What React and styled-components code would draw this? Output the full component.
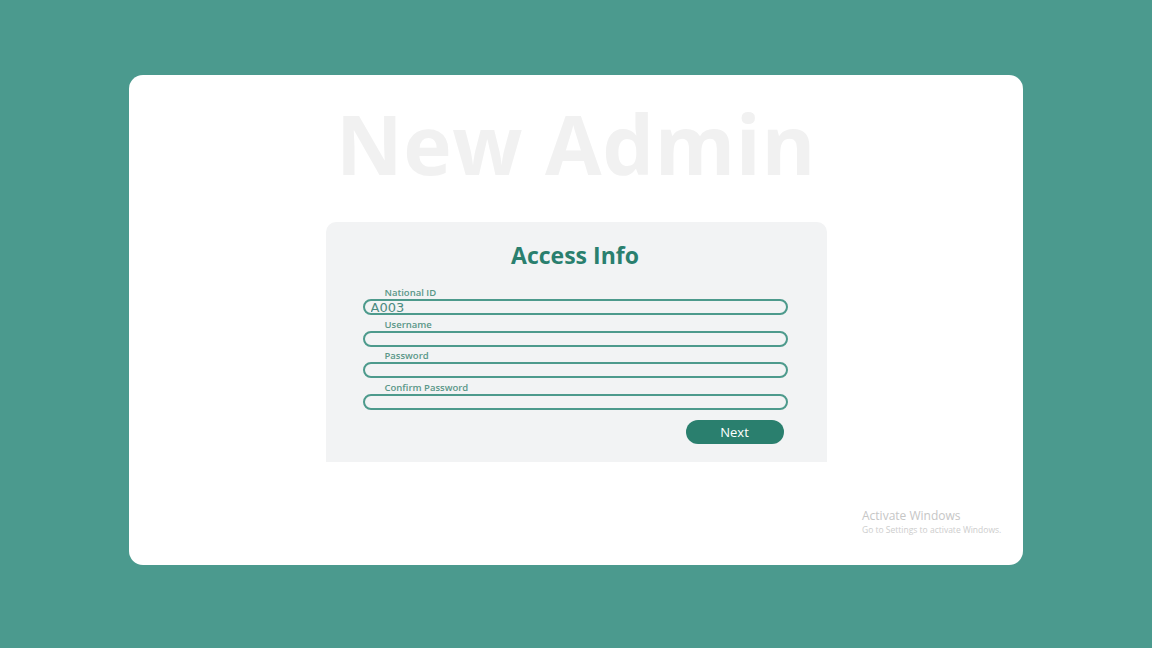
import React from "react";
import styled, { createGlobalStyle } from "styled-components";

const App = () => {
  return (
    <>
      <GlobalStyle />
      <Page>
        <Card>
          <BigTitle>New Admin</BigTitle>
          <Panel>
            <PanelTitle>Access Info</PanelTitle>
            <Fields>
              <Field>
                <Label>National ID</Label>
                <Input defaultValue="A003" />
              </Field>
              <Field>
                <Label>Username</Label>
                <Input />
              </Field>
              <Field>
                <Label>Password</Label>
                <Input type="password" />
              </Field>
              <Field>
                <Label>Confirm Password</Label>
                <Input type="password" />
              </Field>
            </Fields>
            <ButtonRow>
              <NextButton>Next</NextButton>
            </ButtonRow>
          </Panel>
          <Watermark>
            <WatermarkTitle>Activate Windows</WatermarkTitle>
            <WatermarkText>Go to Settings to activate Windows.</WatermarkText>
          </Watermark>
        </Card>
      </Page>
    </>
  );
};

export default App;

const GlobalStyle = createGlobalStyle`
  body {
    margin: 0;
    padding: 0;
    background: #4b9a8e;
    font-family: "Open Sans", "Liberation Sans", sans-serif;
  }
  * {
    box-sizing: border-box;
  }
`;
const Page = styled.div`
    width: 1152px;
    height: 648px;
    display: flex;
    justify-content: center;
    padding-top: 75px;
`;
const Card = styled.div`
    position: relative;
    width: 894px;
    height: 490px;
    background: #fff;
    border-radius: 14px;
    display: flex;
    flex-direction: column;
    align-items: center;
    padding-top: 13px;
`;
const BigTitle = styled.div`
    color: #f1f1f1;
    font-family: "Open Sans", sans-serif;
    font-size: 82px;
    font-weight: 700;
    line-height: 110px;
    letter-spacing: 0.6px;
    height: 110px;
`;
const Panel = styled.div`
    margin-top: 24px;
    width: 501px;
    background: #f2f3f4;
    border-radius: 10px 10px 0 0;
    padding: 18px 39px 18px 37px;
    display: flex;
    flex-direction: column;
`;
const PanelTitle = styled.div`
    text-align: center;
    color: #2a7f6e;
    font-family: "Open Sans", sans-serif;
    font-size: 23px;
    font-weight: 700;
    line-height: 30px;
    margin-bottom: 17px;
`;
const Fields = styled.div`
    display: flex;
    flex-direction: column;
    gap: 3.5px;
`;
const Field = styled.div`
    display: flex;
    flex-direction: column;
`;
const Label = styled.label`
    padding-left: 22px;
    color: #5a9788;
    font-family: "Open Sans", sans-serif;
    font-size: 9.5px;
    font-weight: 600;
    line-height: 12px;
`;
const Input = styled.input`
    width: 100%;
    height: 16px;
    border: 2px solid #4d9a8c;
    border-radius: 8px;
    background: transparent;
    padding: 0 6px;
    color: #4b8a7f;
    font-family: "DejaVu Sans", sans-serif;
    font-size: 13px;
    outline: none;
`;
const ButtonRow = styled.div`
    display: flex;
    justify-content: flex-end;
    margin-top: 10px;
    padding-right: 4px;
`;
const NextButton = styled.button`
    width: 98px;
    height: 24px;
    border: none;
    border-radius: 12px;
    background: #2a7f6e;
    color: #fff;
    font-family: "Open Sans", sans-serif;
    font-size: 13px;
    font-weight: 500;
    cursor: pointer;
`;
const Watermark = styled.div`
    position: absolute;
    left: 733px;
    top: 433px;
    display: flex;
    flex-direction: column;
`;
const WatermarkTitle = styled.div`
    color: #c6c6c6;
    font-family: "Open Sans", sans-serif;
    font-size: 12px;
    line-height: 15px;
`;
const WatermarkText = styled.div`
    color: #cdcdcd;
    font-family: "Open Sans", sans-serif;
    font-size: 8.5px;
    line-height: 13px;
`;
